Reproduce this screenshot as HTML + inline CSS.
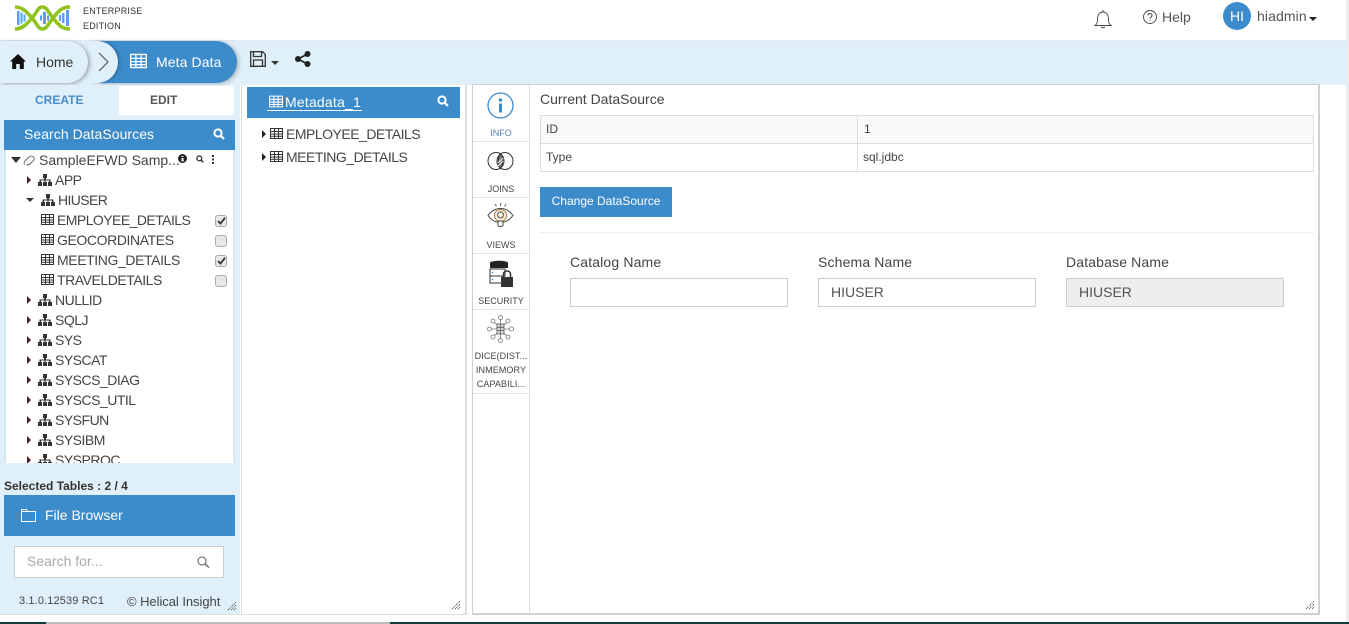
<!DOCTYPE html>
<html><head><meta charset="utf-8"><style>
*{box-sizing:border-box}
html,body{margin:0;padding:0;width:1349px;height:624px;overflow:hidden;background:#fff;font-family:"Liberation Sans",sans-serif;color:#333}
.a{position:absolute;white-space:nowrap}
svg{position:absolute;display:block;overflow:visible}
.row{position:absolute;height:20px;line-height:20px;font-size:14px;color:#444;white-space:nowrap;letter-spacing:-.5px}
.cb{position:absolute;left:215px;width:12px;height:12px;background:#e8e8e8;border:1px solid #aaa;border-radius:3px}
.tab{position:absolute;left:473px;width:56px;text-align:center;font-size:9px;color:#444;border-bottom:1px solid #e4e4e4}
.tab span{position:absolute;left:0;width:56px;text-align:center;line-height:14px}
.lab{position:absolute;font-size:14px;color:#444;white-space:nowrap;letter-spacing:.15px}
.fld{position:absolute;top:278px;width:218px;height:29px;border:1px solid #ccc;font-size:14px;color:#555;line-height:27px;padding-left:12px}
</style></head><body>
<svg width="0" height="0" style="position:absolute"><defs>
<symbol id="tb" viewBox="0 0 13 11"><path d="M.5.5h12v10H.5zM.5 3.500h12M.5 6h12M.5 8.300h12M4.500.5v10M8.500.5v10" fill="none" stroke="currentColor" stroke-width="1"/></symbol>
<symbol id="sc" viewBox="0 0 14 12"><path d="M5 0h4v4H8v1.500h4.500V8H14v4h-4V8h1V6.500H7.500V8H9v4H5V8h1.500V6.500H3V8h1v4H0V8h1.500V5.500H6V4H5z" fill="currentColor"/></symbol>
<symbol id="se" viewBox="0 0 12 12"><circle cx="5" cy="5" r="3.600" fill="none" stroke="currentColor" stroke-width="2"/><path d="M7.500 7.500l3.500 3.500" stroke="currentColor" stroke-width="2.200"/></symbol>
</defs></svg>

<!-- header -->
<svg style="left:14px;top:4px" width="58" height="28" viewBox="0 0 58 28">
<g fill="#5aa0ee"><rect x="3" y="7" width="2.500" height="14"/><rect x="6.500" y="8.500" width="2" height="11"/><rect x="9.500" y="10.500" width="2" height="7"/><rect x="26" y="11.500" width="2" height="5"/><rect x="29" y="8" width="3" height="12"/><rect x="33" y="11.500" width="2" height="5"/><rect x="45" y="11" width="2" height="6"/><rect x="48" y="9" width="2.500" height="10"/><rect x="52" y="6" width="3" height="16"/></g>
<path d="M1 3C8 3 12 7 18 14S24 25 28.500 25 34 20 39 14 47 3 56 3" fill="none" stroke="#90c31f" stroke-width="3.600"/>
<path d="M1 25C8 25 12 21 18 14S24 3 28.500 3 34 8 39 14 47 25 56 25" fill="none" stroke="#90c31f" stroke-width="3.600"/>
</svg>
<div class="a" style="left:83px;top:4px;font-size:9px;line-height:15px;color:#333;letter-spacing:.2px">ENTERPRISE<br>EDITION</div>
<svg style="left:1094px;top:9px" width="18" height="20" viewBox="0 0 18 20"><path d="M1 16.500c2-1.500 2.500-3 2.500-6.500 0-4 2-7 5.500-7s5.500 3 5.500 7c0 3.500.5 5 2.500 6.500zM7 18c1 1 3 1 4 0M9 1v2" fill="none" stroke="#444" stroke-width=".9"/></svg>
<svg style="left:1143px;top:10px" width="14" height="14" viewBox="0 0 14 14"><circle cx="7" cy="7" r="6.500" fill="none" stroke="#444" stroke-width=".9"/><path d="M5 5.500C5 3 9 3 9 5.500 9 7 7 7 7 8.800M7 10v1" fill="none" stroke="#444"/></svg>
<div class="a" style="left:1162px;top:9px;font-size:14px;line-height:17px;color:#555">Help</div>
<div class="a" style="left:1223px;top:2px;width:28px;height:28px;border-radius:50%;background:#3c8bcb;color:#fff;font-size:14px;line-height:28px;text-align:center">HI</div>
<div class="a" style="left:1257px;top:8px;font-size:14px;line-height:17px;color:#555;letter-spacing:.1px">hiadmin</div>
<div class="a" style="left:1309px;top:17px;border:4px solid transparent;border-top:4px solid #222;border-bottom:0"></div>

<!-- band -->
<div class="a" style="left:0;top:40px;width:1349px;height:45px;background:#e0f0fa;border-top:1px solid #e3e8ea"></div>
<div class="a" style="left:98px;top:41px;width:139px;height:42px;background:#3c8bcb;border-radius:0 21px 21px 0;box-shadow:2px 1px 4px rgba(0,0,0,.25)"></div>
<div class="a" style="left:88px;top:41px;width:30px;height:42px;background:#e0f0fa;border-radius:0 21px 21px 0;box-shadow:2px 0 3px rgba(0,0,0,.2)"></div>
<div class="a" style="left:0;top:41px;width:88px;height:42px;background:#e0f0fa;border-radius:0 21px 21px 0;box-shadow:2px 1px 4px rgba(0,0,0,.3)"></div>
<svg style="left:10px;top:54px" width="16" height="15" viewBox="0 0 16 15"><path d="M8 0L0 7.500h2.200V15h4v-5h3.600v5h4V7.500H16z" fill="#111"/></svg>
<div class="a" style="left:36px;top:54px;font-size:14px;line-height:17px;color:#333">Home</div>
<svg style="left:98px;top:52px" width="12" height="20" viewBox="0 0 12 20"><path d="M1 1l9 9-9 9" fill="none" stroke="#444"/></svg>
<svg style="left:130px;top:53px;color:#fff" width="17" height="16"><use href="#tb" width="17" height="16"/></svg>
<div class="a" style="left:156px;top:53px;font-size:14px;line-height:18px;color:#fff;letter-spacing:.1px">Meta Data</div>
<svg style="left:250px;top:51px" width="16" height="16" viewBox="0 0 16 16"><path d="M.7.700h11.800l2.800 2.800v11.800H.7zM3.500 1v4.500h8V1M3.500 15V9h9v6" fill="none" stroke="#333" stroke-width="1.300"/></svg>
<div class="a" style="left:271px;top:61px;border:4px solid transparent;border-top:4px solid #333;border-bottom:0"></div>
<svg style="left:295px;top:51px" width="16" height="16" viewBox="0 0 16 16"><circle cx="3" cy="8" r="3" fill="#222"/><circle cx="12.500" cy="3" r="3" fill="#222"/><circle cx="12.500" cy="13" r="3" fill="#222"/><path d="M3 8l9.500-5M3 8l9.500 5" stroke="#222" stroke-width="1.600"/></svg>

<!-- left panel -->
<div class="a" style="left:0;top:85px;width:240px;height:530px;background:#e0f0fa;border-bottom:1px solid #ddd"></div>
<div class="a" style="left:119px;top:86px;width:115px;height:29px;background:#fff"></div>
<div class="a" style="left:35px;top:92px;font-size:12px;line-height:16px;color:#4a8ccb;font-weight:bold">CREATE</div>
<div class="a" style="left:150px;top:92px;font-size:12px;line-height:16px;color:#555;font-weight:bold">EDIT</div>
<div class="a" style="left:4px;top:120px;width:231px;height:30px;background:#3c8bcb;color:#fff;font-size:14px;line-height:29px;padding-left:20px;letter-spacing:.05px">Search DataSources</div>
<svg style="left:213px;top:128px;color:#fff" width="12" height="12"><use href="#se" width="12" height="12"/></svg>

<div class="a" style="left:4px;top:150px;width:231px;height:313px;background:#fff;border-left:2px solid #d8e6ef;border-right:2px solid #d8e6ef;overflow:hidden">
<div style="position:absolute;left:-6px;top:-150px;width:240px;height:630px">
<div class="a" style="left:11px;top:157px;border:5px solid transparent;border-top:6px solid #333;border-bottom:0"></div>
<svg style="left:23px;top:155px" width="13" height="11" viewBox="0 0 13 11"><path d="M2 9.500c-1.500-1-1-2.500 0-3.500l4-4c1.500-1.500 3.500-1 4.500 0s1 2.500 0 3.500L7 9c-1 1-2 .5-2.500 0M3.500 9.800c1 .5 2 0 3-1" fill="none" stroke="#666" stroke-width=".9"/></svg>
<div class="row" style="left:39px;top:150px;letter-spacing:0">SampleEFWD Samp...</div>
<svg style="left:178px;top:154px" width="9" height="9" viewBox="0 0 9 9"><circle cx="4.500" cy="4.500" r="4.500" fill="#222"/><path d="M3.500 2h2v1h-2zM3.500 4h2v2.500h.5v.8H3.200v-.8h.5V4.800h-.2z" fill="#fff"/></svg>
<svg style="left:196px;top:155px;color:#333" width="8" height="8"><use href="#se" width="8" height="8"/></svg>
<div class="a" style="left:212px;top:155px;width:2px;height:2px;background:#333;box-shadow:0 3.500px 0 #333,0 7px 0 #333"></div>

<div class="a" style="left:27px;top:176px;border:4px solid transparent;border-left:4px solid #4a1d28;border-right:0"></div>
<svg style="left:38px;top:174px;color:#333" width="14" height="12"><use href="#sc" width="14" height="12"/></svg><div class="row" style="left:55px;top:170px">APP</div>
<div class="a" style="left:26px;top:198px;border:4px solid transparent;border-top:4px solid #333;border-bottom:0"></div>
<svg style="left:41px;top:194px;color:#333" width="14" height="12"><use href="#sc" width="14" height="12"/></svg><div class="row" style="left:58px;top:190px;letter-spacing:-.6px">HIUSER</div>

<svg style="left:41px;top:214px;color:#333" width="13" height="11"><use href="#tb" width="13" height="11"/></svg><div class="row" style="left:57px;top:210px;letter-spacing:-.55px">EMPLOYEE_DETAILS</div><div class="cb" style="top:215px"></div>
<svg style="left:217px;top:217px" width="9" height="8" viewBox="0 0 9 8"><path d="M1 4l2.500 2.500L8 .8" fill="none" stroke="#333" stroke-width="1.800"/></svg>
<svg style="left:41px;top:234px;color:#333" width="13" height="11"><use href="#tb" width="13" height="11"/></svg><div class="row" style="left:57px;top:230px;letter-spacing:-.4px">GEOCORDINATES</div><div class="cb" style="top:235px"></div>
<svg style="left:41px;top:254px;color:#333" width="13" height="11"><use href="#tb" width="13" height="11"/></svg><div class="row" style="left:57px;top:250px;letter-spacing:-.4px">MEETING_DETAILS</div><div class="cb" style="top:255px"></div>
<svg style="left:217px;top:257px" width="9" height="8" viewBox="0 0 9 8"><path d="M1 4l2.500 2.500L8 .8" fill="none" stroke="#333" stroke-width="1.800"/></svg>
<svg style="left:41px;top:274px;color:#333" width="13" height="11"><use href="#tb" width="13" height="11"/></svg><div class="row" style="left:57px;top:270px;letter-spacing:-.45px">TRAVELDETAILS</div><div class="cb" style="top:275px"></div>

<div class="a" style="left:27px;top:296px;border:4px solid transparent;border-left:4px solid #4a1d28;border-right:0"></div><svg style="left:38px;top:294px;color:#333" width="14" height="12"><use href="#sc" width="14" height="12"/></svg><div class="row" style="left:55px;top:290px">NULLID</div>
<div class="a" style="left:27px;top:316px;border:4px solid transparent;border-left:4px solid #4a1d28;border-right:0"></div><svg style="left:38px;top:314px;color:#333" width="14" height="12"><use href="#sc" width="14" height="12"/></svg><div class="row" style="left:55px;top:310px">SQLJ</div>
<div class="a" style="left:27px;top:336px;border:4px solid transparent;border-left:4px solid #4a1d28;border-right:0"></div><svg style="left:38px;top:334px;color:#333" width="14" height="12"><use href="#sc" width="14" height="12"/></svg><div class="row" style="left:55px;top:330px">SYS</div>
<div class="a" style="left:27px;top:356px;border:4px solid transparent;border-left:4px solid #4a1d28;border-right:0"></div><svg style="left:38px;top:354px;color:#333" width="14" height="12"><use href="#sc" width="14" height="12"/></svg><div class="row" style="left:55px;top:350px">SYSCAT</div>
<div class="a" style="left:27px;top:376px;border:4px solid transparent;border-left:4px solid #4a1d28;border-right:0"></div><svg style="left:38px;top:374px;color:#333" width="14" height="12"><use href="#sc" width="14" height="12"/></svg><div class="row" style="left:55px;top:370px">SYSCS_DIAG</div>
<div class="a" style="left:27px;top:396px;border:4px solid transparent;border-left:4px solid #4a1d28;border-right:0"></div><svg style="left:38px;top:394px;color:#333" width="14" height="12"><use href="#sc" width="14" height="12"/></svg><div class="row" style="left:55px;top:390px">SYSCS_UTIL</div>
<div class="a" style="left:27px;top:416px;border:4px solid transparent;border-left:4px solid #4a1d28;border-right:0"></div><svg style="left:38px;top:414px;color:#333" width="14" height="12"><use href="#sc" width="14" height="12"/></svg><div class="row" style="left:55px;top:410px">SYSFUN</div>
<div class="a" style="left:27px;top:436px;border:4px solid transparent;border-left:4px solid #4a1d28;border-right:0"></div><svg style="left:38px;top:434px;color:#333" width="14" height="12"><use href="#sc" width="14" height="12"/></svg><div class="row" style="left:55px;top:430px">SYSIBM</div>
<div class="a" style="left:27px;top:456px;border:4px solid transparent;border-left:4px solid #4a1d28;border-right:0"></div><svg style="left:38px;top:454px;color:#333" width="14" height="12"><use href="#sc" width="14" height="12"/></svg><div class="row" style="left:55px;top:450px">SYSPROC</div>
</div></div>

<div class="a" style="left:4px;top:478px;font-size:12px;line-height:16px;color:#333;font-weight:bold;letter-spacing:0">Selected Tables : 2 / 4</div>
<div class="a" style="left:4px;top:495px;width:231px;height:41px;background:#3c8bcb;color:#fff;font-size:14px;line-height:40px;padding-left:41px">File Browser</div>
<svg style="left:21px;top:509px" width="15" height="13" viewBox="0 0 15 13"><path d="M.5.500h5l1 2h8v10H.5zM.5 2.500h6" fill="none" stroke="#fff"/></svg>
<div class="a" style="left:14px;top:546px;width:210px;height:32px;background:#fff;border:1px solid #ccc;font-size:14px;line-height:28px;padding-left:12px;color:#aaa">Search for...</div>
<svg style="left:197px;top:556px" width="13" height="12" viewBox="0 0 13 12"><circle cx="5" cy="5" r="4" fill="none" stroke="#555"/><path d="M8 8l4 3.500" stroke="#555" stroke-width="1.200"/></svg>
<div class="a" style="left:19px;top:594px;font-size:11px;line-height:15px;color:#444;letter-spacing:.13px">3.1.0.12539 RC1</div>
<div class="a" style="left:127px;top:594px;font-size:13px;line-height:15px;color:#444;letter-spacing:-.05px">© Helical Insight</div>
<svg style="left:228px;top:602px" width="8" height="8" viewBox="0 0 8 8"><path d="M0 8L8 0M3 8l5-5M6 8l2-2" stroke="#444" stroke-dasharray="1 1"/></svg>

<!-- middle panel -->
<div class="a" style="left:241px;top:85px;width:226px;height:530px;background:#fff;border-right:2px solid #ddd;border-bottom:1px solid #ddd;border-left:1px solid #ddd"></div>
<div class="a" style="left:247px;top:87px;width:213px;height:31px;background:#3c8bcb"></div>
<svg style="left:269px;top:95px;color:#fff" width="14" height="13"><use href="#tb" width="14" height="13"/></svg>
<div class="a" style="left:285px;top:94px;font-size:14px;line-height:17px;color:#fff;letter-spacing:.2px">Metadata_1</div>
<div class="a" style="left:267px;top:110px;width:95px;height:1px;background:#fff"></div>
<svg style="left:437px;top:95px;color:#fff" width="12" height="12"><use href="#se" width="12" height="12"/></svg>
<div class="a" style="left:262px;top:130px;border:4px solid transparent;border-left:4px solid #222;border-right:0"></div>
<svg style="left:270px;top:128px;color:#333" width="13" height="11"><use href="#tb" width="13" height="11"/></svg>
<div class="row" style="left:286px;top:124px">EMPLOYEE_DETAILS</div>
<div class="a" style="left:262px;top:153px;border:4px solid transparent;border-left:4px solid #222;border-right:0"></div>
<svg style="left:270px;top:151px;color:#333" width="13" height="11"><use href="#tb" width="13" height="11"/></svg>
<div class="row" style="left:286px;top:147px">MEETING_DETAILS</div>
<svg style="left:452px;top:601px" width="8" height="8" viewBox="0 0 8 8"><path d="M0 8L8 0M3 8l5-5M6 8l2-2" stroke="#444" stroke-dasharray="1 1"/></svg>

<!-- right panel -->
<div class="a" style="left:472px;top:84px;width:848px;height:531px;background:#fff;border:1px solid #d0d0d0;border-right:2px solid #d0d0d0;border-bottom:2px solid #d0d0d0"></div>
<div class="a" style="left:529px;top:85px;width:1px;height:529px;background:#ddd"></div>

<div class="tab" style="top:85px;height:57px"><span style="top:41px;color:#5a7fbf">INFO</span></div>
<svg style="left:487px;top:92px" width="27" height="27" viewBox="0 0 27 27"><circle cx="13.500" cy="13.500" r="12.500" fill="none" stroke="#3c8bcb" stroke-width="1.300"/><rect x="12" y="11.500" width="3" height="9" fill="#3c8bcb"/><circle cx="13.500" cy="8" r="1.700" fill="#3c8bcb"/></svg>
<div class="tab" style="top:142px;height:56px"><span style="top:40px">JOINS</span></div>
<svg style="left:487px;top:150px" width="27" height="22" viewBox="0 0 27 22"><ellipse cx="9" cy="11" rx="8" ry="8.500" fill="none" stroke="#333"/><ellipse cx="18" cy="11" rx="8" ry="8.500" fill="none" stroke="#333"/><path d="M13.500 3.500c3 3.500 3 11.500 0 15-3-3.500-3-11.500 0-15z" fill="#777" stroke="#333"/><path d="M11 13l5-5M11 16l5-5" stroke="#fff" stroke-width=".9"/></svg>
<div class="tab" style="top:198px;height:56px"><span style="top:40px">VIEWS</span></div>
<svg style="left:487px;top:203px" width="27" height="28" viewBox="0 0 27 28"><path d="M1 12.500C5 7 9 5.500 13.500 5.500S22 7 26 12.500C22 18 18 19.500 13.500 19.500S5 18 1 12.500z" fill="none" stroke="#444"/><circle cx="13.500" cy="12.500" r="6" fill="#fbeedd" stroke="#b08040"/><circle cx="13.500" cy="12" r="3" fill="none" stroke="#555"/><path d="M11 18h5v4c0 2-5 2-5 0z" fill="#fff" stroke="#444"/><path d="M13.500 0v3M8 1l1.500 2.500M19 1l-1.500 2.500" stroke="#666"/></svg>
<div class="tab" style="top:254px;height:56px"><span style="top:40px">SECURITY</span></div>
<svg style="left:489px;top:260px" width="25" height="28" viewBox="0 0 25 28"><path d="M1 3c0-3 18-3 18 0v5H1z" fill="#222"/><rect x="1" y="9" width="15" height="7" fill="#fff" stroke="#333"/><rect x="1" y="16" width="13" height="7" fill="#fff" stroke="#333"/><circle cx="3.500" cy="12.500" r=".8" fill="#3c8bcb"/><circle cx="3.500" cy="19.500" r=".8" fill="#3c8bcb"/><rect x="12" y="17" width="12" height="10" fill="#333"/><path d="M14.500 17v-3c0-4 7-4 7 0v3" fill="none" stroke="#333" stroke-width="1.500"/></svg>
<div class="tab" style="top:310px;height:84px"><span style="top:39px;font-size:9px;letter-spacing:.1px">DICE(DIST...</span><span style="top:53px;font-size:9px;letter-spacing:.1px">INMEMORY</span><span style="top:67px;font-size:9px;letter-spacing:.1px">CAPABILI...</span></div>
<svg style="left:487px;top:315px" width="27" height="28" viewBox="0 0 27 28"><g fill="none" stroke="#777" stroke-width=".8"><circle cx="13.500" cy="2.500" r="2"/><circle cx="13.500" cy="25.500" r="2"/><circle cx="2.500" cy="14" r="2"/><circle cx="24.500" cy="14" r="2"/><circle cx="6" cy="6" r="2"/><circle cx="21" cy="6" r="2"/><circle cx="6" cy="22" r="2"/><circle cx="21" cy="22" r="2"/><path d="M13.500 4.500V9M13.500 19v4.500M4.500 14H10M17 14h5.500M7.500 7.500L10 10M19.500 7.500L17 10M7.500 20.500L10 18M19.500 20.500L17 18"/><rect x="10" y="9" width="7" height="10" fill="#ddd" stroke="#555"/><path d="M10 12.300h7M10 15.600h7M13.500 9v10" stroke="#555"/></g></svg>

<div class="a" style="left:540px;top:91px;font-size:14px;line-height:17px;color:#444">Current DataSource</div>
<div class="a" style="left:540px;top:115px;width:774px;height:57px;border:1px solid #ddd;background:linear-gradient(#f9f9f9 0 27px,#ddd 27px 28px,#fff 28px)"></div>
<div class="a" style="left:857px;top:115px;width:1px;height:57px;background:#ddd"></div>
<div class="a" style="left:546px;top:122px;font-size:12px;line-height:14px;color:#444">ID</div>
<div class="a" style="left:864px;top:122px;font-size:12px;line-height:14px;color:#444">1</div>
<div class="a" style="left:546px;top:150px;font-size:12px;line-height:14px;color:#444">Type</div>
<div class="a" style="left:863px;top:150px;font-size:12px;line-height:14px;color:#444">sql.jdbc</div>
<div class="a" style="left:540px;top:187px;width:132px;height:30px;background:#3c8bcb;color:#fff;font-size:12px;line-height:28px;text-align:center">Change DataSource</div>
<div class="a" style="left:540px;top:232px;width:774px;height:1px;background:#eee"></div>

<div class="lab" style="left:570px;top:254px">Catalog Name</div>
<div class="lab" style="left:818px;top:254px">Schema Name</div>
<div class="lab" style="left:1066px;top:254px">Database Name</div>
<div class="fld" style="left:570px"></div>
<div class="fld" style="left:818px">HIUSER</div>
<div class="fld" style="left:1066px;background:#eee">HIUSER</div>
<svg style="left:1306px;top:601px" width="8" height="8" viewBox="0 0 8 8"><path d="M0 8L8 0M3 8l5-5M6 8l2-2" stroke="#444" stroke-dasharray="1 1"/></svg>

<!-- edges -->
<div class="a" style="left:1346px;top:0;width:3px;height:622px;background:#ececec"></div>
<div class="a" style="left:0;top:622px;width:1349px;height:2px;background:#123c3c"></div>
<div class="a" style="left:46px;top:622px;width:344px;height:2px;background:#bbb"></div>
</body></html>
